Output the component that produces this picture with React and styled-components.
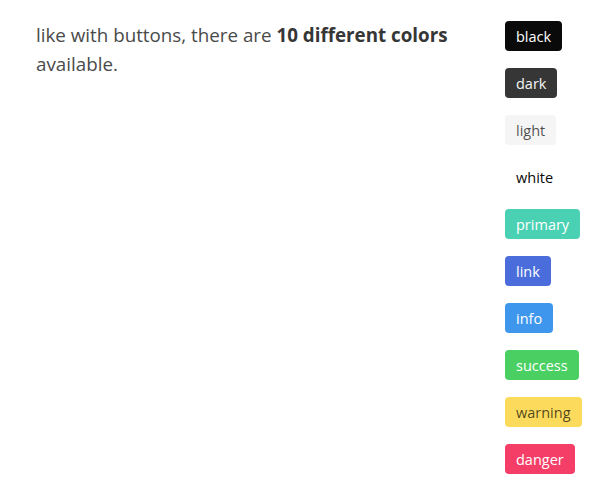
import styled, { createGlobalStyle } from "styled-components";

const GlobalStyle = createGlobalStyle`
  html, body {
    margin: 0;
    padding: 0;
    background: #fff;
  }
  body {
    font-family: "Open Sans", "Noto Sans", sans-serif;
    color: #4a4a4a;
  }
`;

const tagColors = {
  black: { bg: "#0a0a0a", fg: "#fff" },
  dark: { bg: "#363636", fg: "#f5f5f5" },
  light: { bg: "#f5f5f5", fg: "rgba(0, 0, 0, 0.7)" },
  white: { bg: "#fff", fg: "#0a0a0a" },
  primary: { bg: "#4ad1b3", fg: "#fff" },
  link: { bg: "#4a6ddb", fg: "#fff" },
  info: { bg: "#3f97ed", fg: "#fff" },
  success: { bg: "#4ad062", fg: "#fff" },
  warning: { bg: "#fcdb5c", fg: "rgba(0, 0, 0, 0.7)" },
  danger: { bg: "#f53e67", fg: "#fff" },
};

const names = Object.keys(tagColors);

export default function App() {
  return (
    <>
      <GlobalStyle />
      <Page>
        <Text>
          like with buttons, there are <strong>10 different colors</strong>{" "}
          available.
        </Text>
        <TagList>
          {names.map((name) => (
            <Tag key={name} $color={name}>
              {name}
            </Tag>
          ))}
        </TagList>
      </Page>
    </>
  );
}

const Page = styled.div`
  display: flex;
  align-items: flex-start;
  padding: 21px 24px 20px 36px;
`;

const Text = styled.p`
  flex: 1;
  margin: 0;
  padding-right: 20px;
  font-size: 18.8px;
  line-height: 29px;

  strong {
    color: #363636;
    font-weight: 700;
  }
`;

const TagList = styled.div`
  display: flex;
  flex-direction: column;
  align-items: flex-start;
  gap: 17px;
  width: 87px;
`;

const Tag = styled.span`
  display: inline-flex;
  align-items: center;
  justify-content: center;
  height: 30px;
  padding: 0 11px;
  border-radius: 4px;
  font-size: 14.5px;
  white-space: nowrap;
  background: ${(p) => tagColors[p.$color].bg};
  color: ${(p) => tagColors[p.$color].fg};
`;
